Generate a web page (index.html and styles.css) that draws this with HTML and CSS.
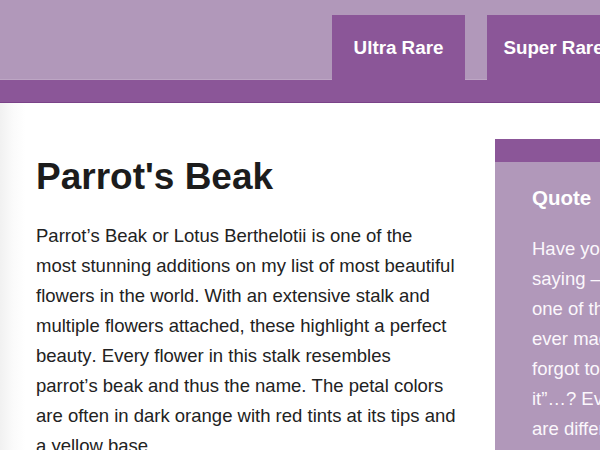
FILE: index.html
```html
<!DOCTYPE html>
<html lang="en">
<head>
<meta charset="utf-8">
<title>Parrot's Beak</title>
<link rel="stylesheet" href="styles.css">
</head>
<body>
<header class="site-header">
  <nav class="tabs">
    <a class="tab" href="#">Ultra Rare</a>
    <a class="tab" href="#">Super Rare</a>
  </nav>
  <div class="band"></div>
</header>
<div class="page">
  <main class="article">
    <h1 class="title">Parrot's Beak</h1>
    <p class="body-text">Parrot’s Beak or Lotus Berthelotii is one of the most stunning additions on my list of most beautiful flowers in the world. With an extensive stalk and multiple flowers attached, these highlight a perfect beauty. Every flower in this stalk resembles parrot’s beak and thus the name. The petal colors are often in dark orange with red tints at its tips and a yellow base.</p>
  </main>
  <aside class="sidebar">
    <h3 class="sidebar-title">Quote</h3>
    <p class="sidebar-text">Have you heard the<br>saying — “Flowers are<br>one of the best things<br>ever made, but God<br>forgot to put a soul in<br>it”…? Every flower we<br>are different in beauty.</p>
  </aside>
</div>
</body>
</html>
```
FILE: styles.css
```css
html, body {
  margin: 0;
  padding: 0;
  overflow: hidden;
  background: #fff;
  font-family: "Liberation Sans", Arial, Helvetica, sans-serif;
}

.site-header {
  background: #b198ba;
}

.tabs {
  display: flex;
  align-items: flex-end;
  gap: 22px;
  padding: 15px 0 0 332px;
  height: 64px;
  white-space: nowrap;
  border-bottom: 1px solid #bda6c4;
}

.tab {
  display: flex;
  align-items: center;
  justify-content: center;
  width: 133px;
  height: 65px;
  margin-bottom: -1px;
  background: #8b5698;
  color: #fff;
  font-weight: bold;
  font-size: 18.8px;
  text-decoration: none;
  box-sizing: border-box;
  flex-shrink: 0;
}

.band {
  height: 22px;
  background: #8b5698;
  border-bottom: 1px solid #7a4288;
}

.page {
  display: flex;
  gap: 38.5px;
  padding-left: 36px;
  background: linear-gradient(to right, #f1f1f1 0, #fbfbfb 14px, #fff 26px);
  min-height: 400px;
}

.article {
  width: 420.5px;
  flex-shrink: 0;
  padding-top: 52px;
}

.title {
  margin: 0;
  font-size: 37px;
  line-height: 43px;
  font-weight: bold;
  color: #1c1c1c;
}

.body-text {
  margin: 23px 0 0;
  font-size: 18.5px;
  line-height: 30px;
  color: #222;
  font-kerning: none;
}

.sidebar {
  margin-top: 36px;
  width: 260px;
  flex-shrink: 0;
  background: #b198ba;
  border-top: 23px solid #8b5698;
  padding: 24px 37px 20px;
  color: #fbf7fc;
}

.sidebar-title {
  margin: 0;
  font-size: 20.5px;
  line-height: 24px;
  font-weight: bold;
  color: #fff;
}

.sidebar-text {
  margin: 24px 0 0;
  font-size: 18.5px;
  line-height: 30px;
  white-space: nowrap;
}
```
